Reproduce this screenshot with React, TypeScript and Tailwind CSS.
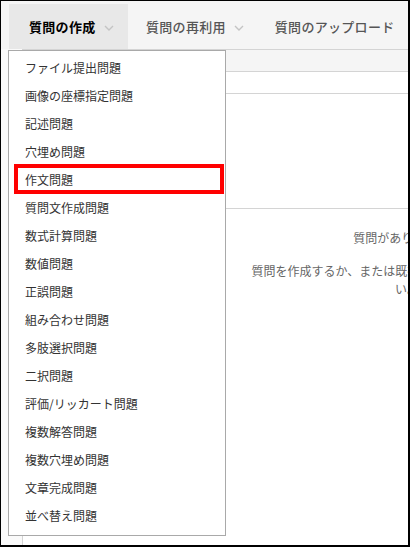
const menuItems = [
  "ファイル提出問題",
  "画像の座標指定問題",
  "記述問題",
  "穴埋め問題",
  "作文問題",
  "質問文作成問題",
  "数式計算問題",
  "数値問題",
  "正誤問題",
  "組み合わせ問題",
  "多肢選択問題",
  "二択問題",
  "評価/リッカート問題",
  "複数解答問題",
  "複数穴埋め問題",
  "文章完成問題",
  "並べ替え問題",
];

function Chevron() {
  return (
    <svg width="10" height="6" viewBox="0 0 10 6" className="ml-[8px] mt-[3px]">
      <polyline points="1,1 5,5 9,1" fill="none" stroke="#c4c4c4" strokeWidth="1.4" />
    </svg>
  );
}

function App() {
  return (
    <div
      className="relative w-[410px] h-[547px] overflow-hidden bg-white border-black border-l border-t border-r-2 border-b-2"
      style={{ fontFamily: '"Noto Sans CJK JP", "Noto Sans", sans-serif' }}
    >
      {/* top tabs */}
      <div className="h-[48px] bg-[#f5f5f5] flex items-end pl-[8px]">
        <div className="h-[45px] w-[119px] bg-[#e8e8e8] flex items-center pl-[20px]">
          <span className="text-[13px] font-bold text-black tracking-[0.3px]">質問の作成</span>
          <Chevron />
        </div>
        <div className="h-[45px] flex items-center pl-[18px]">
          <span className="text-[13px] font-medium text-[#555] tracking-[0.3px]">質問の再利用</span>
          <Chevron />
        </div>
        <div className="h-[45px] flex items-center pl-[31px]">
          <span className="text-[13px] font-medium text-[#555] tracking-[0.3px] whitespace-nowrap">質問のアップロード</span>
        </div>
      </div>

      {/* body */}
      <div className="flex h-[497px]">
        <div className="w-[22px] bg-[#fafafa] border-r border-[#d4d4d4]" />
        <div className="flex-1 overflow-hidden">
          <div className="h-[23px] bg-[#f5f5f5] border-t border-b border-[#d4d4d4]" />
          <div className="h-[22px] border-b border-[#d4d4d4]" />
          <div className="h-[115px] border-b border-[#d4d4d4]" />
          <div className="w-[768px] text-center text-[12px] text-[#666] whitespace-nowrap">
            <p className="mt-[20px] leading-[18px]">質問がありません。</p>
            <p className="mt-[15px] leading-[18px]">
              質問を作成するか、または既存の質問を再利用してくださ
              <br />
              い。
            </p>
          </div>
        </div>
      </div>

      {/* dropdown menu */}
      <div className="absolute left-[7px] top-[49px] w-[218px] h-[486px] bg-white border border-[#a9a9a9] pt-[3px]">
        {menuItems.map((item) => (
          <div key={item} className="h-[28px] flex items-center pl-[16px] text-[12px] text-[#333]">
            {item}
          </div>
        ))}
      </div>

      {/* highlight */}
      <div className="absolute left-[13px] top-[163px] w-[210px] h-[30px] border-[4px] border-[#ff0000]" />
    </div>
  );
}

export default App;
